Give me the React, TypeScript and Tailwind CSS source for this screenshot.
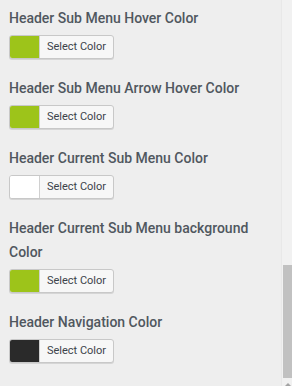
import React from 'react';

const ITEMS = [
  { label: 'Header Sub Menu Hover Color', color: '#9dc41a' },
  { label: 'Header Sub Menu Arrow Hover Color', color: '#9dc41a' },
  { label: 'Header Current Sub Menu Color', color: '#ffffff' },
  { label: 'Header Current Sub Menu background Color', color: '#9dc41a' },
  { label: 'Header Navigation Color', color: '#2a2a2a' },
];

function ColorButton({ color }: { color: string }) {
  return (
    <button className="flex h-[24px] w-[105px] items-stretch overflow-hidden rounded-[3px] border border-[#c8c8c8] bg-[#f7f7f7] p-0 shadow-[0_1px_0_#d5d5d5]">
      <span className="w-[30px] border-r border-[#d0d0d0]" style={{ backgroundColor: color }} />
      <span className="flex flex-1 items-center justify-center text-[11px] text-[#3c434a]">Select Color</span>
    </button>
  );
}

export default function App() {
  return (
    <div className="flex h-[386px] w-[292px] overflow-hidden bg-[#eeeeee] font-['Roboto',sans-serif]">
      <div className="flex flex-1 flex-col pl-[9px] pr-[20px] pt-[6px]">
        {ITEMS.map((item) => (
          <div key={item.label} className="mb-[17px] flex flex-col gap-[5px]">
            <div className="text-[14px] font-medium leading-[24px] text-[#50575e]">{item.label}</div>
            <ColorButton color={item.color} />
          </div>
        ))}
      </div>
      <div className="flex w-[11px] flex-col border-l border-[#e8e8e8] bg-[#f1f1f1] pl-[1px]">
        <div className="h-[265px]" />
        <div className="h-[113px] bg-[#c1c1c1]" />
        <div className="flex flex-1 items-end justify-center">
          <svg width="6" height="3" viewBox="0 0 6 3">
            <path d="M0 3 L3 0 L6 3 Z" fill="#a3a3a3" />
          </svg>
        </div>
      </div>
    </div>
  );
}
